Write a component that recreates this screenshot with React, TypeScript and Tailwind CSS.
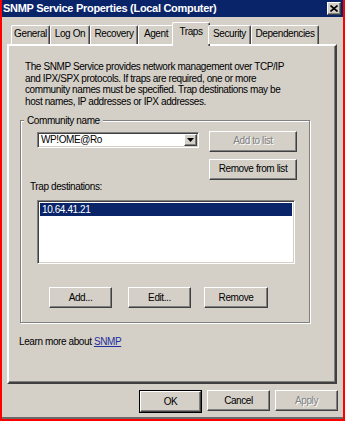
import React from "react";

const raised =
  "border border-t-white border-l-white border-r-[#404040] border-b-[#404040] shadow-[inset_-1px_-1px_0_#808080]";
const sunken =
  "border border-t-[#808080] border-l-[#808080] border-r-white border-b-white shadow-[inset_1px_1px_0_#404040,inset_-1px_-1px_0_#d4d0c8]";

interface ButtonProps {
  label: string;
  disabled?: boolean;
  className?: string;
}

const WinButton: React.FC<ButtonProps> = ({ label, disabled, className }) => (
  <div
    className={`${raised} bg-[#d4d0c8] h-[21px] flex items-center justify-center ${
      disabled ? "text-[#808080] [text-shadow:1px_1px_0_#fff]" : "text-black"
    } ${className ?? ""}`}
  >
    {label}
  </div>
);

const tabs = [
  { label: "General", w: "w-[39px]" },
  { label: "Log On", w: "w-[40px]" },
  { label: "Recovery", w: "w-[48px]" },
  { label: "Agent", w: "w-[36px]" },
  { label: "Traps", w: "w-[38px]", active: true },
  { label: "Security", w: "w-[43px]" },
  { label: "Dependencies", w: "w-[68px]" },
];

const TabStrip: React.FC = () => (
  <div className="relative z-10 flex items-end h-[22px] ml-[9px] mt-[5px]">
    {tabs.map((t) =>
      t.active ? (
        <div
          key={t.label}
          className={`${t.w} h-[24px] -mx-[2px] -mb-[2px] bg-[#d4d0c8] border-l border-t border-r border-l-white border-t-white border-r-[#404040] shadow-[inset_-1px_0_0_#808080] rounded-t-[2px] flex justify-center pt-[3px]`}
        >
          {t.label}
        </div>
      ) : (
        <div
          key={t.label}
          className={`${t.w} h-[19px] bg-[#d4d0c8] border-l border-t border-r border-l-white border-t-white border-r-[#404040] shadow-[inset_-1px_0_0_#808080] rounded-t-[2px] flex justify-center pt-[2px]`}
        >
          {t.label}
        </div>
      )
    )}
  </div>
);

const TrapsPanel: React.FC = () => (
  <div className="ml-[5px] w-[330px] h-[340px] border-2 border-t-white border-l-white border-r-[#404040] border-b-[#404040] shadow-[inset_-1px_-1px_0_#808080] flex flex-col">
    <p className="ml-[16px] mt-[15px] whitespace-nowrap">
      The SNMP Service provides network management over TCP/IP
      <br />
      and IPX/SPX protocols. If traps are required, one or more
      <br />
      community names must be specified. Trap destinations may be
      <br />
      host names, IP addresses or IPX addresses.
    </p>

    <fieldset className="ml-[11px] mt-[7px] w-[290px] border border-[#808080] shadow-[inset_1px_1px_0_#fff,1px_1px_0_#fff] pb-[14px]">
      <legend className="ml-[3px] px-[3px] bg-[#d4d0c8]">Community name</legend>

      <div className="flex items-start pt-[4px] pl-[16px]">
        <div
          className={`${sunken} mt-[1px] w-[162px] h-[16px] bg-white flex items-center justify-between pl-[3px] pr-[1px]`}
        >
          <span>WP!OME@Ro</span>
          <div className={`${raised} bg-[#d4d0c8] w-[13px] h-[12px] flex items-center justify-center`}>
            <svg width="7" height="4" viewBox="0 0 7 4">
              <path d="M0 0h7L3.5 4z" fill="#000" />
            </svg>
          </div>
        </div>
        <div className="ml-[10px] flex flex-col gap-[7px]">
          <WinButton label="Add to list" disabled className="w-[88px]" />
          <WinButton label="Remove from list" className="w-[88px]" />
        </div>
      </div>

      <div className="ml-[9px] mt-[1px]">Trap destinations:</div>

      <div className={`${sunken} ml-[16px] mt-[8px] w-[258px] h-[64px] bg-white p-[2px]`}>
        <div className="h-[13px] bg-[#0a246a] text-white pl-[2px] flex items-center">
          10.64.41.21
        </div>
      </div>

      <div className="flex mt-[23px] ml-[28px]">
        <WinButton label="Add..." className="w-[63px]" />
        <WinButton label="Edit..." className="w-[63px] ml-[16px]" />
        <WinButton label="Remove" className="w-[64px] ml-[13px]" />
      </div>
    </fieldset>

    <div className="ml-[10px] mt-[13px]">
      Learn more about <span className="text-[#1f2f9f] underline">SNMP</span>
    </div>
  </div>
);

export default function App() {
  return (
    <div className="w-[345px] h-[421px] bg-[#ff0000] px-[2px] pb-[2px] font-['Liberation_Sans',Arial,sans-serif] text-[10px] leading-[11.7px] tracking-[-0.4px] text-black">
      <div className="h-[419px] bg-[#d4d0c8] border-b-2 border-b-[#6a6a6a] flex flex-col">
        <div className="h-[17px] bg-[#0a246a] flex items-center justify-between pl-[1px] pr-[2px]">
          <span className="text-white font-bold text-[11px] tracking-[-0.3px]">
            SNMP Service Properties (Local Computer)
          </span>
          <div className={`${raised} bg-[#d4d0c8] w-[14px] h-[13px] flex items-center justify-center`}>
            <svg width="8" height="7" viewBox="0 0 8 7">
              <path d="M0.5 0.5L7.5 6.5M7.5 0.5L0.5 6.5" stroke="#000" strokeWidth="1.6" />
            </svg>
          </div>
        </div>

        <TabStrip />
        <TrapsPanel />

        <div className="flex justify-end gap-[5px] mt-[6px] pr-[5px]">
          <div className="border border-black">
            <WinButton label="OK" className="w-[61px] h-[19px]" />
          </div>
          <WinButton label="Cancel" className="w-[63px]" />
          <WinButton label="Apply" disabled className="w-[63px]" />
        </div>
      </div>
    </div>
  );
}
